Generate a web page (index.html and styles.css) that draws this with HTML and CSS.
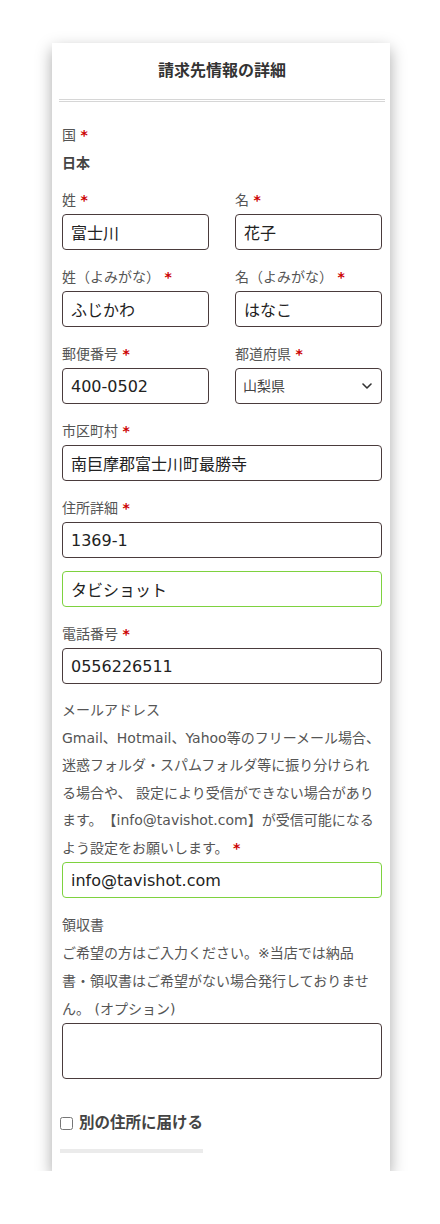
FILE: index.html
```html
<!DOCTYPE html>
<html lang="ja">
<head>
<meta charset="utf-8">
<title>請求先情報の詳細</title>
<link rel="stylesheet" href="styles.css">
</head>
<body>
<div class="card">
  <div class="card-head">
    <h3 class="title">請求先情報の詳細</h3>
  </div>
  <div class="card-body">
    <div class="static">
      <div class="label">国 <span class="req">*</span></div>
      <div class="value">日本</div>
    </div>

    <div class="row2">
      <div class="field">
        <label class="label">姓 <span class="req">*</span></label>
        <input class="input" type="text" value="富士川">
      </div>
      <div class="field">
        <label class="label">名 <span class="req">*</span></label>
        <input class="input" type="text" value="花子">
      </div>
    </div>

    <div class="row2">
      <div class="field">
        <label class="label">姓（よみがな） <span class="req">*</span></label>
        <input class="input" type="text" value="ふじかわ">
      </div>
      <div class="field">
        <label class="label">名（よみがな） <span class="req">*</span></label>
        <input class="input" type="text" value="はなこ">
      </div>
    </div>

    <div class="row2">
      <div class="field">
        <label class="label">郵便番号 <span class="req">*</span></label>
        <input class="input" type="text" value="400-0502">
      </div>
      <div class="field">
        <label class="label">都道府県 <span class="req">*</span></label>
        <div class="select-wrap">
          <select class="select">
            <option>山梨県</option>
          </select>
          <svg class="chevron" width="10" height="6" viewBox="0 0 10 6"><path d="M1 1 L5 5 L9 1" fill="none" stroke="#333" stroke-width="1.6" stroke-linecap="round" stroke-linejoin="round"/></svg>
        </div>
      </div>
    </div>

    <div class="field">
      <label class="label">市区町村 <span class="req">*</span></label>
      <input class="input" type="text" value="南巨摩郡富士川町最勝寺">
    </div>

    <div class="field">
      <label class="label">住所詳細 <span class="req">*</span></label>
      <input class="input" type="text" value="1369-1">
      <input class="input input-ok input-extra" type="text" value="タビショット">
    </div>

    <div class="field">
      <label class="label">電話番号 <span class="req">*</span></label>
      <input class="input" type="tel" value="0556226511">
    </div>

    <div class="field">
      <label class="label label-long">メールアドレス<br>Gmail、Hotmail、Yahoo等のフリーメール場合、<br>迷惑フォルダ・スパムフォルダ等に振り分けられ<br>る場合や、 設定により受信ができない場合があり<br>ます。【info@tavishot.com】が受信可能になる<br>よう設定をお願いします。 <span class="req">*</span></label>
      <input class="input input-ok" type="email" value="info@tavishot.com">
    </div>

    <div class="field">
      <label class="label">領収書<br>ご希望の方はご入力ください。※当店では納品<br>書・領収書はご希望がない場合発行しておりませ<br>ん。 (オプション)</label>
      <textarea class="textarea"></textarea>
    </div>

    <label class="ship">
      <input class="check" type="checkbox">
      <span>別の住所に届ける</span>
    </label>
  </div>
</div>
</body>
</html>
```

FILE: styles.css
```css
* {
  box-sizing: border-box;
}

body {
  margin: 0;
  background: #fff;
  font-family: "DejaVu Sans", "Noto Sans CJK JP", sans-serif;
  color: #555;
  text-spacing-trim: space-all;
}

.card {
  margin: 43px 0 0 52px;
  width: 338px;
  background: #fff;
  box-shadow: 0 6px 15px rgba(0, 0, 0, 0.34);
}

.card-head {
  margin: 0 5px 0 7px;
  padding: 16px 0;
  border-bottom: 3px double #d6d6d6;
}

.title {
  margin: 0;
  font-size: 16px;
  line-height: 24px;
  font-weight: 700;
  color: #333;
  text-align: center;
}

.card-body {
  padding: 19px 8px 18px 10px;
}

.label {
  display: block;
  font-size: 14px;
  line-height: 28px;
  color: #555;
}

.label-long {
  line-height: 27.5px;
}

.req {
  color: #c00;
  font-weight: 700;
}

.static {
  margin-bottom: 9px;
}

.value {
  font-size: 14px;
  line-height: 28px;
  font-weight: 600;
  color: #444;
}

.row2 {
  display: grid;
  grid-template-columns: 1fr 1fr;
  column-gap: 26px;
}

.field {
  margin-bottom: 13px;
}

.input,
.select,
.textarea {
  display: block;
  width: 100%;
  margin: 0;
  border: 1px solid #4a3b3c;
  border-radius: 4px;
  background: #fff;
  font-family: inherit;
}

.input {
  height: 36px;
  padding: 0 8px;
  font-size: 16px;
  color: #222;
}

.input-ok {
  border-color: #7ed23f;
}

.input-extra {
  margin-top: 13px;
}

.select-wrap {
  position: relative;
}

.select {
  height: 36px;
  padding: 0 24px 0 7px;
  font-size: 14px;
  color: #444;
  appearance: none;
  -webkit-appearance: none;
}

.chevron {
  position: absolute;
  right: 10px;
  top: 15px;
  pointer-events: none;
}

.textarea {
  height: 56px;
  padding: 6px 8px;
  font-size: 14px;
  resize: none;
}

.ship {
  display: inline-flex;
  align-items: center;
  margin: 19px 0 0 -2px;
  padding-bottom: 14px;
  border-bottom: 4px solid #ebebeb;
  font-size: 15.5px;
  line-height: 24px;
  font-weight: 700;
  color: #444;
}

.check {
  width: 13px;
  height: 13px;
  margin: 0 6px 0 0;
}
```
